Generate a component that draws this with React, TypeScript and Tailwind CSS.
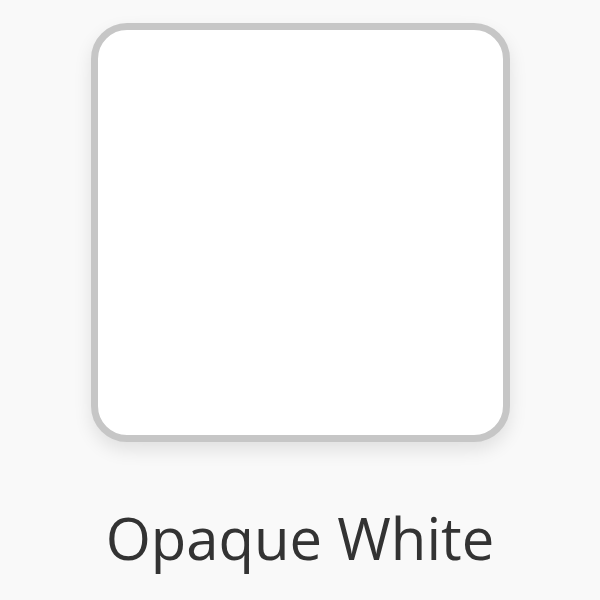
export default function App() {
  return (
    <div className="w-[600px] h-[600px] bg-[#f9f9f9] flex flex-col items-center pt-[23px]">
      <div className="w-[419px] h-[419px] rounded-[36px] border-[7px] border-[#c6c6c6] bg-white shadow-[0_8px_18px_rgba(0,0,0,0.10)]" />
      <div className="mt-[67px] text-[58px] leading-none text-[#333333] font-['Open_Sans',sans-serif]">
        Opaque White
      </div>
    </div>
  );
}
